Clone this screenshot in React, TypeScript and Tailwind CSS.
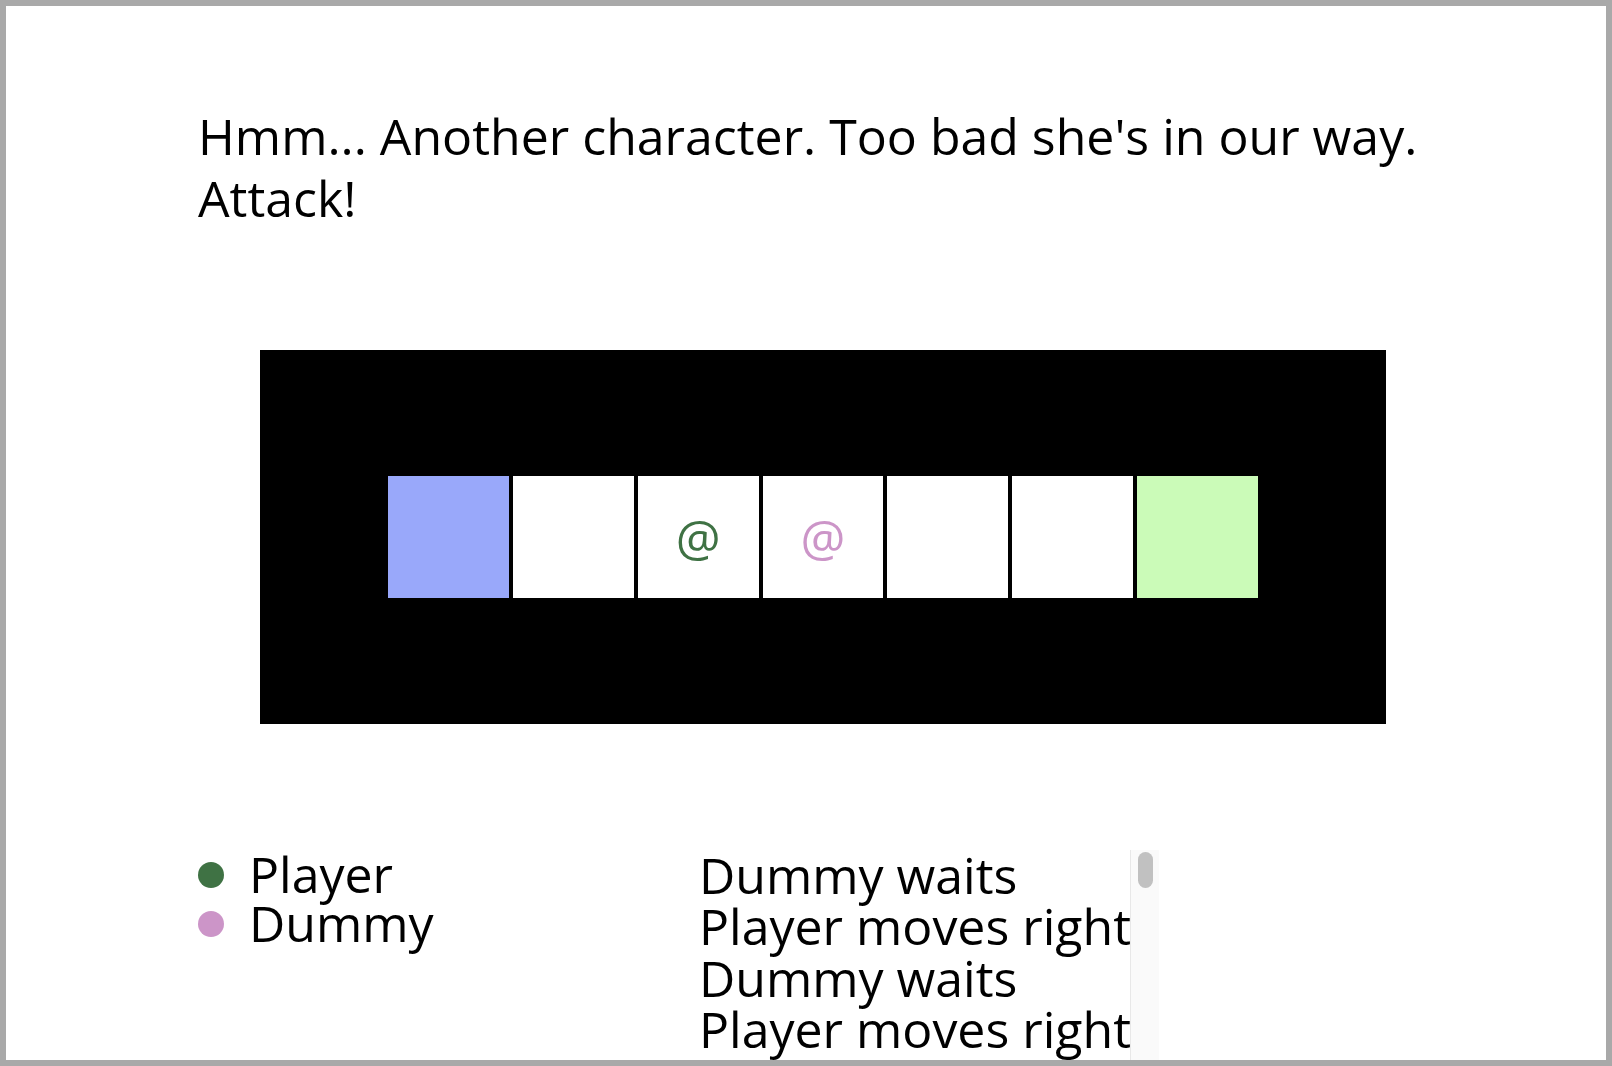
import React from 'react';

const cells = [
  { bg: 'bg-[#99a8fa]', glyph: null },
  { bg: 'bg-white', glyph: null },
  { bg: 'bg-white', glyph: 'text-[#3f7244]' },
  { bg: 'bg-white', glyph: 'text-[#cc95c8]' },
  { bg: 'bg-white', glyph: null },
  { bg: 'bg-white', glyph: null },
  { bg: 'bg-[#cbfbb8]', glyph: null },
];

const characters = [
  { name: 'Player', dot: 'bg-[#3f7244]' },
  { name: 'Dummy', dot: 'bg-[#cc95c8]' },
];

// newest turn first
const log = ['Dummy waits', 'Player moves right', 'Dummy waits', 'Player moves right'];

export default function App() {
  return (
    <div className="h-screen overflow-hidden border-[6px] border-[#a9a9a9] bg-white font-['Open_Sans',sans-serif] text-black">
      <div className="pl-[192px] pt-[100px]">
        <p className="w-[1250px] text-[50px] leading-[61.5px]">
          Hmm... Another character. Too bad she's in our way. Attack!
        </p>

        <div className="ml-[62px] mt-[121px] flex h-[374px] w-[1126px] items-center justify-center bg-black">
          <div className="grid w-[870px] grid-cols-7 gap-1">
            {cells.map((c, i) => (
              <div key={i} className={`flex h-[122px] items-center justify-center ${c.bg}`}>
                {c.glyph && <span className={`text-[50px] leading-none ${c.glyph}`}>@</span>}
              </div>
            ))}
          </div>
        </div>

        <div className="mt-[126px] flex items-start">
          <ul className="w-[501px] text-[50px] leading-[49px]">
            {characters.map((ch) => (
              <li key={ch.name} className="flex items-center gap-[25px]">
                <span className={`h-[26px] w-[26px] rounded-full ${ch.dot}`} />
                {ch.name}
              </li>
            ))}
          </ul>

          {/* turn log with its scrollbar */}
          <div className="flex h-[210px] w-[460px] overflow-hidden">
            <div className="w-[431px] text-[50px] leading-[51.4px] whitespace-nowrap">
              {log.map((line, i) => (
                <div key={i}>{line}</div>
              ))}
            </div>
            <div className="w-[29px] border-l border-[#e8e8e8] bg-[#fafafa] pl-[7px] pr-[6px] pt-[2px]">
              <div className="h-[36px] rounded-full bg-[#c1c1c1]" />
            </div>
          </div>
        </div>
      </div>
    </div>
  );
}
